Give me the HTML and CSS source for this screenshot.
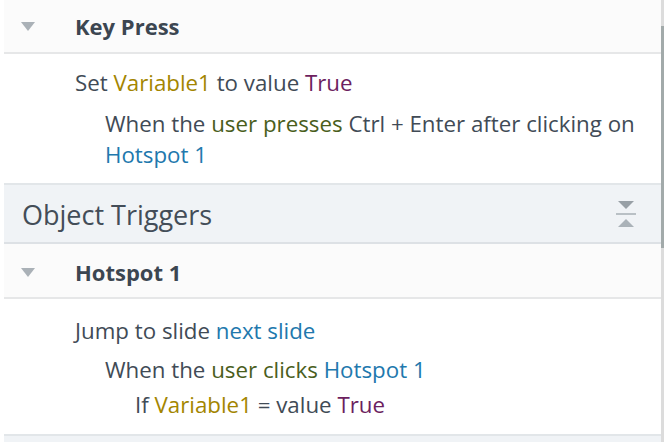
FILE: index.html
```html
<!DOCTYPE html>
<html>
<head>
<meta charset="utf-8">
<link rel="stylesheet" href="styles.css">
</head>
<body>
<div class="frame">
  <div class="panel">
    <div class="row-head">
      <span class="caret"></span>
      <span class="head-title">Key Press</span>
    </div>
    <div class="row-body body-a">
      <div class="line l1">Set <span class="var">Variable1</span> to value <span class="val">True</span></div>
      <div class="line l2 wrap">When the <span class="usr">user presses</span> Ctrl + Enter after clicking on <span class="obj">Hotspot 1</span></div>
    </div>
    <div class="section">
      <span class="section-title">Object Triggers</span>
      <svg class="collapse" width="22" height="28" viewBox="0 0 22 28">
        <polygon points="2,0 18,0 10,8" fill="#98a0a6"/>
        <rect x="0" y="12" width="20" height="2" fill="#b9c0c5"/>
        <polygon points="10,18 18,26 2,26" fill="#aab2b8"/>
      </svg>
    </div>
    <div class="row-head head-b">
      <span class="caret"></span>
      <span class="head-title">Hotspot 1</span>
    </div>
    <div class="row-body body-b">
      <div class="line l1">Jump to slide <span class="obj">next slide</span></div>
      <div class="line l2 b2">When the <span class="usr">user clicks</span> <span class="obj">Hotspot 1</span></div>
      <div class="line l3">If <span class="var">Variable1</span> = value <span class="val">True</span></div>
    </div>
    <div class="section tail"></div>
  </div>
  <div class="scrollbar"><div class="thumb"></div></div>
</div>
</body>
</html>
```

FILE: styles.css
```css
html, body {
  margin: 0;
  padding: 0;
  background: #ffffff;
}
body {
  font-family: "Open Sans", "Noto Sans", sans-serif;
  color: #414b56;
  font-size: 22.3px;
  width: 664px;
  height: 442px;
  overflow: hidden;
}
.frame {
  display: flex;
  height: 442px;
}
.panel {
  flex: 1;
  margin-left: 4px;
  display: flex;
  flex-direction: column;
}
.row-head {
  height: 52px;
  background: #fbfbfb;
  border-bottom: 2px solid #e6e7e8;
  display: flex;
  align-items: center;
  flex-shrink: 0;
}
.head-b {
  height: 55px;
  padding-top: 3px;
  box-sizing: border-box;
}
.caret {
  width: 0;
  height: 0;
  border-left: 7px solid transparent;
  border-right: 7px solid transparent;
  border-top: 9px solid #aab1b7;
  margin-left: 17px;
  margin-right: 40px;
}
.head-title {
  font-weight: 700;
  color: #3c4651;
  font-size: 22px;
}
.row-body {
  flex-shrink: 0;
  border-bottom: 2px solid #e2e6e9;
}
.line {
  line-height: 31px;
  white-space: nowrap;
}
.line.wrap {
  white-space: normal;
}
.l1 { padding-left: 71px; }
.l2 { padding-left: 101px; padding-right: 2px; }
.l3 { padding-left: 131px; }
.body-a {
  height: 131px;
  padding-top: 13px;
  box-sizing: border-box;
}
.body-a .l2 { margin-top: 10px; }
.body-b {
  height: 137px;
  padding-top: 16px;
  box-sizing: border-box;
}
.body-b .b2 { margin-top: 8px; }
.body-b .l3 { margin-top: 4px; }
.section {
  height: 57px;
  background: #f0f3f6;
  border-bottom: 2px solid #dde1e5;
  display: flex;
  align-items: center;
  justify-content: space-between;
  flex-shrink: 0;
}
.section-title {
  font-size: 27px;
  color: #434d58;
  margin-left: 18px;
  margin-top: 2px;
}
.collapse {
  margin-right: 23px;
  margin-top: 2px;
}
.section.tail {
  border-bottom: none;
  height: 6px;
  flex: 1;
}
.var { color: #a38500; }
.val { color: #6d1f5f; }
.usr { color: #4a5e1c; }
.obj { color: #2178ad; }
.scrollbar {
  width: 3px;
  background: #dcdcdc;
}
.thumb {
  margin-top: 26px;
  height: 222px;
  background: #a2aaaa;
}
```
